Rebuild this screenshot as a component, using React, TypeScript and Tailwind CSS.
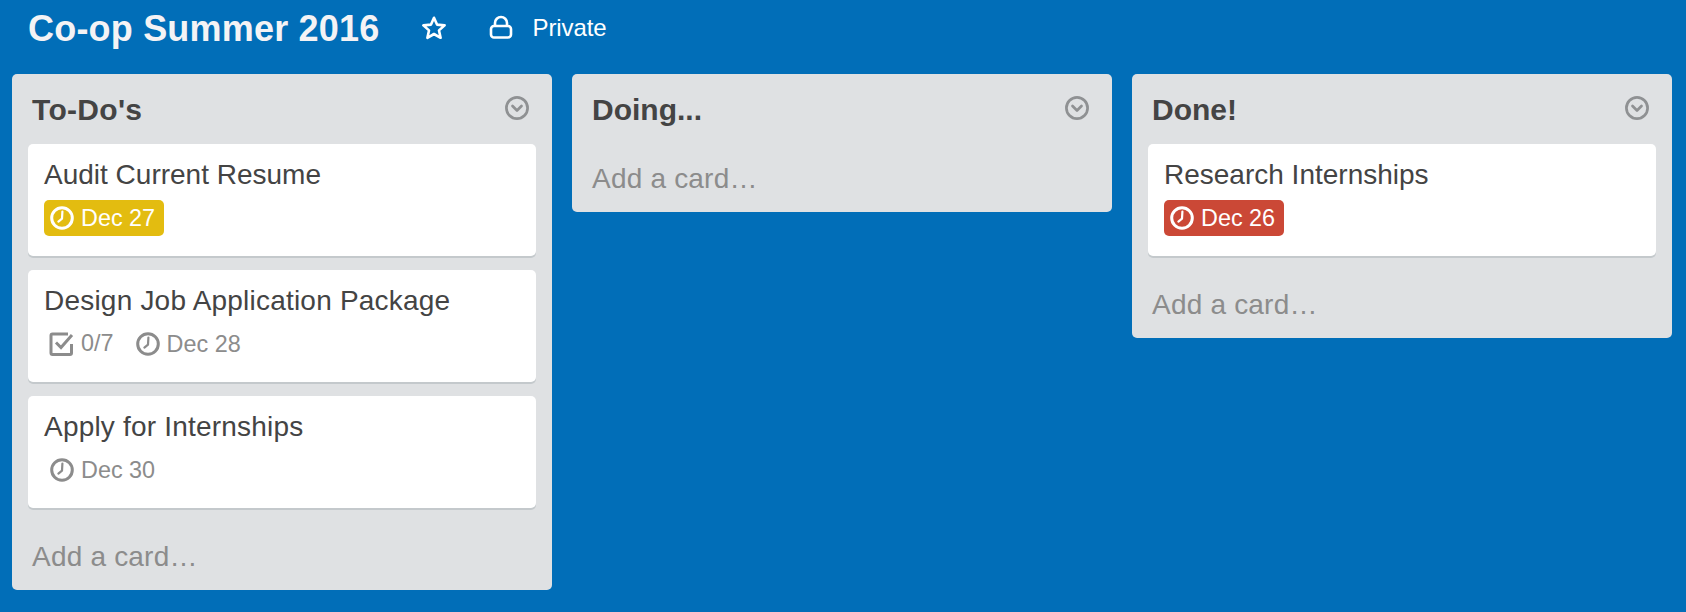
const FONT = "font-['Liberation_Sans',Arial,sans-serif]";

function Clock({ className = "" }: { className?: string }) {
  return (
    <svg viewBox="0 0 24 24" className={`h-6 w-6 shrink-0 ${className}`} fill="none" stroke="currentColor">
      <circle cx="12" cy="12" r="10.3" strokeWidth="3" />
      <path d="M12.4 5.5 L12 12.6 L8.4 15.6" strokeWidth="2.2" strokeLinecap="round" strokeLinejoin="round" />
    </svg>
  );
}

function Check() {
  return (
    <svg viewBox="0 0 25 24" className="h-6 w-[25px] shrink-0 text-[#8c8c8c]" fill="none" stroke="currentColor">
      <path d="M19 2 H3.5 A1.5 1.5 0 0 0 2 3.5 V21 A1.5 1.5 0 0 0 3.5 22.5 H21 A1.5 1.5 0 0 0 22.5 21 V12" strokeWidth="3" />
      <path d="M7 10.5 L12 15.5 L23 3" strokeWidth="3" />
    </svg>
  );
}

function Chevron() {
  return (
    <svg viewBox="0 0 24 24" className="h-6 w-6 text-[#8f9193]" fill="none" stroke="currentColor">
      <circle cx="12" cy="12" r="10.6" strokeWidth="2.7" />
      <path d="M7.5 10 L12 14.5 L16.5 10" strokeWidth="2.7" strokeLinecap="round" strokeLinejoin="round" />
    </svg>
  );
}

function Due({ date, tone }: { date: string; tone?: "yellow" | "red" }) {
  const color =
    tone === "yellow"
      ? "bg-[#e3bc10] text-white"
      : tone === "red"
        ? "bg-[#cb4836] text-white"
        : "text-[#8c8c8c]";
  return (
    <div className={`flex h-9 items-center gap-[7px] rounded-[5px] pl-[6px] pr-[9px] text-[23.4px] leading-9 ${color}`}>
      <Clock />
      <span>{date}</span>
    </div>
  );
}

function Card({ title, tracking, children }: { title: string; tracking: string; children: React.ReactNode }) {
  return (
    <div className="mb-[14px] h-[112px] rounded-[5px] bg-white pl-4 pr-4 pt-[13px] shadow-[0_2px_0_#c4c9cc]">
      <div className={`h-9 text-[28px] leading-9 text-[#444444] ${tracking}`}>{title}</div>
      <div className="mt-[7px] flex">{children}</div>
    </div>
  );
}

function List({ title, tracking = "", children }: { title: string; tracking?: string; children?: React.ReactNode }) {
  return (
    <div className="w-[540px] rounded-[5px] bg-[#dfe1e3]">
      <div className="flex h-[70px] items-start justify-between pl-5 pr-[23px]">
        <h2 className={`mt-[18px] text-[30px] font-bold leading-9 text-[#444444] ${tracking}`}>{title}</h2>
        <div className="mt-[22px]"><Chevron /></div>
      </div>
      {children && <div className="px-4">{children}</div>}
      <div className="flex h-[68px] items-center pl-5 pt-[2px] text-[28px] tracking-[0.2px] text-[#8c8c8c]">Add a card…</div>
    </div>
  );
}

export default function App() {
  return (
    <div className={`h-[612px] w-full bg-[#016eb8] ${FONT}`}>
      <header className="flex h-[74px] items-start pl-7 text-white">
        <h1 className="mt-[9px] text-4xl font-bold leading-10 tracking-[0.2px] text-[#f4f3f5]">Co-op Summer 2016</h1>
        <svg viewBox="0 0 24 24" className="ml-[42px] mt-[16px] h-6 w-6" fill="none" stroke="currentColor" strokeWidth="2.6" strokeLinejoin="round">
          <path d="M12 1.8 L15 8.6 L22.6 9.4 L17 14.4 L18.6 21.8 L12 18 L5.4 21.8 L7 14.4 L1.4 9.4 L9 8.6 Z" />
        </svg>
        <svg viewBox="0 0 24 24" className="ml-[43px] mt-[15px] h-6 w-6" fill="none" stroke="currentColor" strokeWidth="2.6">
          <rect x="2" y="11" width="20" height="11.5" rx="3" />
          <path d="M6 11 V8 A6 6 0 0 1 18 8 V11" />
        </svg>
        <span className="ml-5 mt-[10px] text-2xl leading-9 tracking-[-0.1px]">Private</span>
      </header>
      <main className="flex items-start gap-5 pl-3">
        <List title="To-Do's" tracking="tracking-[0.3px]">
          <Card title="Audit Current Resume" tracking="">
            <Due date="Dec 27" tone="yellow" />
          </Card>
          <Card title="Design Job Application Package" tracking="tracking-[0.21px]">
            <div className="flex h-9 items-center gap-[7px] pl-[5px] pr-4 text-[23.4px] text-[#8c8c8c]">
              <Check />
              <span>0/7</span>
            </div>
            <Due date="Dec 28" />
          </Card>
          <Card title="Apply for Internships" tracking="tracking-[0.2px]">
            <Due date="Dec 30" />
          </Card>
        </List>
        <List title="Doing..." />
        <List title="Done!">
          <Card title="Research Internships" tracking="">
            <Due date="Dec 26" tone="red" />
          </Card>
        </List>
      </main>
    </div>
  );
}
